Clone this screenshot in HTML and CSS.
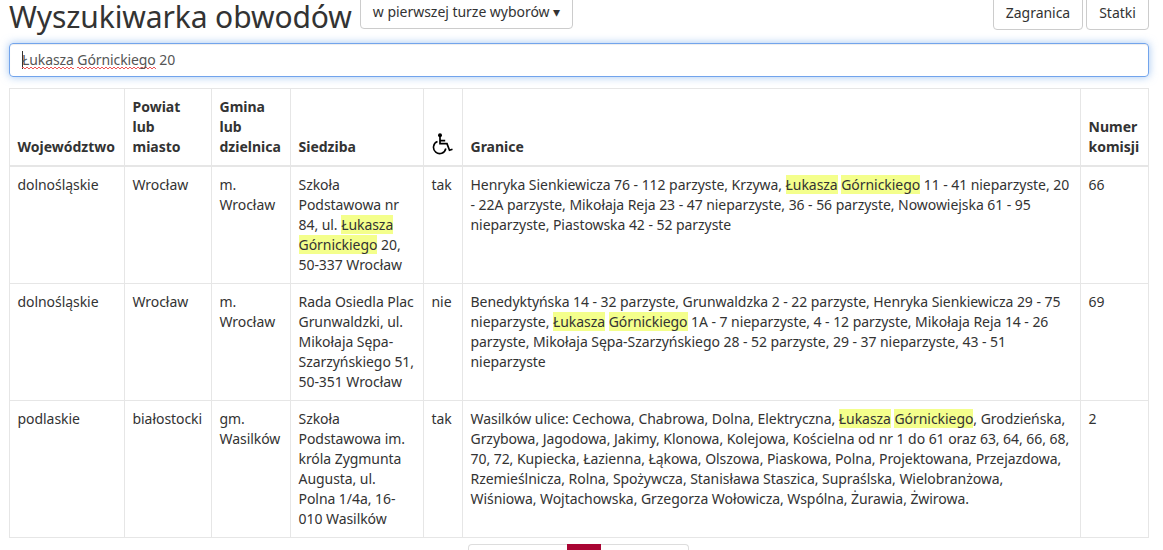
FILE: index.html
```html
<!DOCTYPE html>
<html lang="pl">
<head>
<meta charset="utf-8">
<title>Wyszukiwarka obwodów</title>
<link rel="stylesheet" href="styles.css">
</head>
<body>
<main class="page">
<header class="top">
<h1 class="title">Wyszukiwarka obwodów</h1>
<button class="btn btn-round">w pierwszej turze wyborów ▾</button>
<nav class="links"><button class="btn btn-abroad">Zagranica</button><button class="btn btn-ships">Statki</button></nav>
</header>
<div class="search"><span class="caret"></span><span class="misspelt">Łukasza</span>&nbsp;<span class="misspelt">Górnickiego</span>&nbsp;20</div>
<table class="results">
<colgroup><col class="c-woj"><col class="c-powiat"><col class="c-gmina"><col class="c-siedziba"><col class="c-access"><col class="c-granice"><col class="c-numer"></colgroup>
<thead><tr>
<th>Województwo</th><th>Powiat<br>lub<br>miasto</th><th>Gmina<br>lub<br>dzielnica</th><th>Siedziba</th>
<th><svg class="wheelchair" viewBox="0 0 22 22"><circle cx="8" cy="2.200" r="2" fill="#000"/><path d="M8 3V10.700H15L17.500 17.200L20.500 16.200M8 7.700H13.200" fill="none" stroke="#000" stroke-width="1.700"/><path d="M5.500 8.600A6.200 6.200 0 1 0 13.800 15.500" fill="none" stroke="#000" stroke-width="1.600"/></svg></th>
<th>Granice</th><th>Numer<br>komisji</th>
</tr></thead>
<tbody>
<tr><td>dolnośląskie</td><td>Wrocław</td><td>m.<br>Wrocław</td>
<td>Szkoła<br>Podstawowa nr<br>84, ul. <mark>Łukasza</mark><br><mark>Górnickiego</mark> 20,<br>50-337 Wrocław</td><td>tak</td>
<td>Henryka Sienkiewicza 76 - 112 parzyste, Krzywa, <mark>Łukasza</mark> <mark>Górnickiego</mark> 11 - 41 nieparzyste, 20<br>- 22A parzyste, Mikołaja Reja 23 - 47 nieparzyste, 36 - 56 parzyste, Nowowiejska 61 - 95<br>nieparzyste, Piastowska 42 - 52 parzyste</td><td>66</td></tr>
<tr><td>dolnośląskie</td><td>Wrocław</td><td>m.<br>Wrocław</td>
<td>Rada Osiedla Plac<br>Grunwaldzki, ul.<br>Mikołaja Sępa-<br>Szarzyńskiego 51,<br>50-351 Wrocław</td><td>nie</td>
<td>Benedyktyńska 14 - 32 parzyste, Grunwaldzka 2 - 22 parzyste, Henryka Sienkiewicza 29 - 75<br>nieparzyste, <mark>Łukasza</mark> <mark>Górnickiego</mark> 1A - 7 nieparzyste, 4 - 12 parzyste, Mikołaja Reja 14 - 26<br>parzyste, Mikołaja Sępa-Szarzyńskiego 28 - 52 parzyste, 29 - 37 nieparzyste, 43 - 51<br>nieparzyste</td><td>69</td></tr>
<tr><td>podlaskie</td><td>białostocki</td><td>gm.<br>Wasilków</td>
<td>Szkoła<br>Podstawowa im.<br>króla Zygmunta<br>Augusta, ul.<br>Polna 1/4a, 16-<br>010 Wasilków</td><td>tak</td>
<td>Wasilków ulice: Cechowa, Chabrowa, Dolna, Elektryczna, <mark>Łukasza</mark> <mark>Górnickiego</mark>, Grodzieńska,<br>Grzybowa, Jagodowa, Jakimy, Klonowa, Kolejowa, Kościelna od nr 1 do 61 oraz 63, 64, 66, 68,<br>70, 72, Kupiecka, Łazienna, Łąkowa, Olszowa, Piaskowa, Polna, Projektowana, Przejazdowa,<br>Rzemieślnicza, Rolna, Spożywcza, Stanisława Staszica, Supraślska, Wielobranżowa,<br>Wiśniowa, Wojtachowska, Grzegorza Wołowicza, Wspólna, Żurawia, Żwirowa.</td><td>2</td></tr>
</tbody>
</table>
<div class="pager"><span class="pager-active"></span></div>
</main>
</body>
</html>
```
FILE: styles.css
```css
* { box-sizing: border-box; }
html, body { margin: 0; height: 100%; overflow: hidden; }
body { background: #fff; color: #333; font: 14px/20px "Noto Sans", sans-serif; }
.page { width: 1140px; margin-left: 9px; }
.top { display: flex; align-items: flex-start; height: 43px; }
.title { margin: 0; width: 351px; font-size: 30px; line-height: 33px; font-weight: 400; letter-spacing: -.1px; white-space: nowrap; }
.btn { height: 34px; padding: 6px 11px; border: 1px solid #ccc; border-radius: 4px; background: #fff; color: #333; font: inherit; letter-spacing: -.03px; white-space: nowrap; }
.btn-round { width: 213px; margin-top: -5px; }
.links { display: flex; gap: 3px; margin: -4px 0 0 auto; }
.btn-abroad { width: 90px; }
.btn-ships { width: 63px; }
.search { display: flex; align-items: center; height: 34px; padding: 0 12px; border: 1px solid #72a4ec; border-radius: 4px; color: #555; letter-spacing: -.1px; box-shadow: inset 0 1px 1px rgba(0,0,0,.075), 0 0 8px rgba(102,160,233,.6); }
.caret { width: 1px; height: 18px; margin-right: -1px; background: #333; }
/* Two offset dotted rows form the spell-check zigzag. */
.misspelt {
  background:
    linear-gradient(90deg, #ee5555 2px, transparent 2px) 0 17px / 4px 1px repeat-x,
    linear-gradient(90deg, transparent 2px, #ee5555 2px) 0 18px / 4px 1px repeat-x;
}
.results { width: 1140px; margin-top: 11px; table-layout: fixed; border-collapse: collapse; }
.results th, .results td { padding: 8px 8px 8px 7.5px; border: 1px solid #e6e6e6; vertical-align: top; text-align: left; white-space: nowrap; }
.results td { letter-spacing: -.055px; }
.results th { vertical-align: bottom; border-bottom-width: 2px; }
.c-woj { width: 115px; }
.c-powiat { width: 87px; }
.c-gmina { width: 79px; }
.c-siedziba { width: 133px; }
.c-access { width: 39px; }
.c-granice { width: 618px; }
.c-numer { width: 68px; }
mark { background: #f4ff8c; color: inherit; }
.wheelchair { display: block; width: 22px; height: 22px; margin-bottom: 2px; }
.pager { display: flex; width: 221px; height: 7px; margin: 6px 0 0 459px; padding-left: 98px; border: 1px solid #ddd; border-bottom: 0; border-radius: 4px 4px 0 0; }
.pager-active { width: 34px; height: 7px; margin-top: -1px; background: #a90533; }
```
